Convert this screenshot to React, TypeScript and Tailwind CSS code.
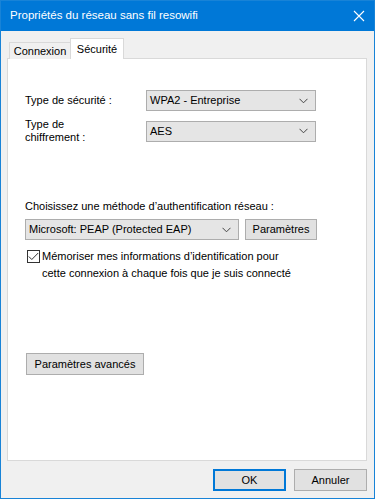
import React from "react";

function Chevron() {
  return (
    <svg width="9" height="6" viewBox="0 0 9 6" className="shrink-0">
      <path d="M0.5 0.8 L4.5 4.8 L8.5 0.8" fill="none" stroke="#444" strokeWidth="1" />
    </svg>
  );
}

function Select({ value, className }: { value: string; className: string }) {
  return (
    <div
      className={
        "flex items-center justify-between border border-[#adadad] bg-[#e5e5e5] pl-[3px] pr-[7px] text-[11px] text-black " +
        className
      }
    >
      <span>{value}</span>
      <Chevron />
    </div>
  );
}

function Button({ label, className }: { label: string; className: string }) {
  return (
    <div
      className={
        "flex items-center justify-center border border-[#adadad] bg-[#e1e1e1] text-[11px] text-black " +
        className
      }
    >
      {label}
    </div>
  );
}

export default function App() {
  return (
    <div
      className="flex h-[499px] w-[375px] flex-col border border-[#1883d7] bg-[#f0f0f0] text-black"
      style={{ fontFamily: '"Liberation Sans", Arial, sans-serif' }}
    >
      <div className="flex h-[30px] shrink-0 items-center justify-between bg-[#0078d7] pl-[9px] pr-[9px] text-[11.5px] text-white">
        <span>Propriétés du réseau sans fil resowifi</span>
        <svg width="12" height="12" viewBox="0 0 12 12">
          <path d="M1 1 L11 11 M11 1 L1 11" stroke="#fff" strokeWidth="1.1" />
        </svg>
      </div>

      <div className="flex flex-1 flex-col px-[6px] pt-[7px]">
        <div className="relative z-10 flex h-[21px] items-end pl-[2px] text-[11px]">
          <div className="flex h-[17px] w-[61px] items-center justify-center border border-r-0 border-b-0 border-[#d9d9d9] bg-[#f0f0f0]">
            Connexion
          </div>
          <div className="flex h-[21px] w-[54px] items-start justify-center border border-b-0 border-[#d9d9d9] bg-white pt-[2px]">
            Sécurité
          </div>
        </div>

        <div className="-mt-px flex h-[403px] w-[360px] flex-col border border-[#d9d9d9] bg-white pl-[17px] text-[11px]">
          <div className="mt-[31px] flex items-center">
            <span className="w-[121px]">Type de sécurité :</span>
            <Select value="WPA2 - Entreprise" className="h-[21px] w-[170px]" />
          </div>
          <div className="mt-[7px] flex items-center">
            <span className="w-[121px] leading-[13px]">
              Type de
              <br />
              chiffrement :
            </span>
            <Select value="AES" className="h-[21px] w-[170px]" />
          </div>

          <div className="mt-[55px] leading-[14px]">Choisissez une méthode d’authentification réseau :</div>
          <div className="mt-[6px] flex items-center gap-[6px]">
            <Select value="Microsoft: PEAP (Protected EAP)" className="h-[21px] w-[214px]" />
            <Button label="Paramètres" className="h-[21px] w-[72px]" />
          </div>
          <div className="mt-[9px] flex items-start pl-[2px]">
            <div className="mt-px flex h-[13px] w-[13px] shrink-0 items-center justify-center border border-[#333] bg-white">
              <svg width="11" height="9" viewBox="0 0 11 9">
                <path d="M0.8 4.5 L3.8 7.5 L10.2 1" fill="none" stroke="#333" strokeWidth="1" />
              </svg>
            </div>
            <span className="ml-[2px] leading-[17px] -mt-[1px]">
              Mémoriser mes informations d’identification pour
              <br />
              cette connexion à chaque fois que je suis connecté
            </span>
          </div>

          <Button label="Paramètres avancés" className="mt-[71px] ml-px h-[22px] w-[118px]" />
        </div>

        <div className="mt-[8px] flex justify-end gap-[8px] pr-[1px]">
          <div className="flex h-[22px] w-[73px] items-center justify-center border-2 border-[#0078d7] bg-[#e1e1e1] text-[11px]">
            OK
          </div>
          <Button label="Annuler" className="h-[22px] w-[73px]" />
        </div>
      </div>
    </div>
  );
}
